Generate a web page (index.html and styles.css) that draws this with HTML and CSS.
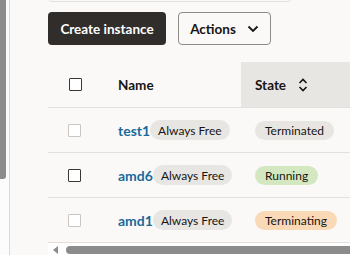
FILE: index.html
```html
<!DOCTYPE html>
<html lang="en">
<head>
  <meta charset="UTF-8" />
  <title>Instances</title>
  <link rel="stylesheet" href="styles.css">
</head>
<body>
  <div class="layout">
    <div class="side"><div class="side-thumb"></div></div>

    <div class="main">
      <div class="filter"></div>

      <div class="toolbar">
        <button class="btn btn-primary">Create instance</button>
        <button class="btn btn-outline">Actions
          <svg width="12" height="8" viewBox="0 0 12 8"><path d="M1.5 1.5 L6 6 L10.5 1.5" fill="none" stroke="#161513" stroke-width="1.8"/></svg>
        </button>
      </div>

      <div class="table">
        <div class="row head">
          <div class="cell check"><span class="box"></span></div>
          <div class="cell name">Name</div>
          <div class="cell state sorted">State
            <svg width="10" height="16" viewBox="0 0 10 16"><path d="M1.5 6 L5 2.5 L8.5 6 M1.5 10 L5 13.5 L8.5 10" fill="none" stroke="#161513" stroke-width="1.6"/></svg>
          </div>
        </div>

        <div class="row">
          <div class="cell check"><span class="box off"></span></div>
          <div class="cell name"><a class="link">test1</a><span class="pill">Always Free</span></div>
          <div class="cell state"><span class="pill status">Terminated</span></div>
        </div>

        <div class="row">
          <div class="cell check"><span class="box"></span></div>
          <div class="cell name"><a class="link">amd6</a><span class="pill">Always Free</span></div>
          <div class="cell state"><span class="pill status running">Running</span></div>
        </div>

        <div class="row">
          <div class="cell check"><span class="box off"></span></div>
          <div class="cell name"><a class="link">amd1</a><span class="pill">Always Free</span></div>
          <div class="cell state"><span class="pill status terminating">Terminating</span></div>
        </div>

        <div class="hscroll">
          <span class="arrow"></span>
          <span class="hthumb"></span>
        </div>
      </div>
    </div>
  </div>
</body>
</html>
```

FILE: styles.css
```css
body {
  margin: 0;
  background: #fbf9f8;
  font-family: Lato, "Noto Sans", sans-serif;
  color: #161513;
  overflow: hidden;
}
.layout {
  display: flex;
  height: 255px;
}
.side {
  width: 9px;
  flex: none;
  background: #fcfcfc;
  border-right: 1px solid #dcdad8;
}
.side-thumb {
  width: 6px;
  height: 179px;
  background: #8c8c8c;
  border-radius: 0 0 3px 0;
}
.main {
  flex: 1;
  min-width: 0;
  padding-left: 38px;
  overflow: hidden;
}
.filter {
  height: 29px;
  margin-top: -29px;
  width: 242px;
  border: 1px solid #e2dfdc;
  border-radius: 4px;
}
.toolbar {
  display: flex;
  gap: 12px;
  margin-top: 10px;
}
.btn {
  height: 33px;
  border-radius: 4px;
  font-family: inherit;
  font-size: 13.5px;
  font-weight: 700;
  padding: 0;
  display: flex;
  align-items: center;
  justify-content: center;
}
.btn-primary {
  width: 118px;
  background: #312d2a;
  color: #fff;
  border: none;
}
.btn-outline {
  width: 93px;
  background: transparent;
  color: #161513;
  border: 1px solid #8f8a85;
  gap: 11px;
}
.table {
  margin-top: 17px;
  width: 420px;
}
.row {
  display: grid;
  grid-template-columns: 70px 123px 1fr;
  height: 44px;
  border-bottom: 1px solid #e2dfdc;
}
.row.head {
  height: 45px;
}
.cell {
  display: flex;
  align-items: center;
}
.head .cell {
  font-size: 13.5px;
  font-weight: 700;
}
.check {
  padding-left: 20px;
}
.head .check {
  padding-left: 21px;
}
.box {
  width: 11px;
  height: 11px;
  border: 1px solid #3a3633;
  border-radius: 1px;
  background: #fff;
}
.box.off {
  border-color: #c9c5c1;
}
.state {
  padding-left: 14px;
}
.sorted {
  background: #e8e6e3;
  gap: 12px;
}
.link {
  color: #1a6a99;
  font-size: 14px;
  font-weight: 700;
}
.pill {
  display: inline-flex;
  align-items: center;
  height: 20px;
  padding: 0 8px;
  border-radius: 10px;
  background: #e8e6e3;
  font-size: 12px;
  white-space: nowrap;
}
.status {
  height: 19px;
  padding: 0 10px;
}
.running {
  background: #d3e8c1;
}
.terminating {
  background: #fad9b7;
}
.hscroll {
  height: 14px;
  background: #fefefe;
  display: flex;
  align-items: center;
}
.arrow {
  width: 0;
  height: 0;
  margin-left: 5px;
  border-top: 4px solid transparent;
  border-bottom: 4px solid transparent;
  border-right: 5px solid #8c8c8c;
}
.hthumb {
  margin-left: 8px;
  flex: 1;
  height: 8px;
  background: #8c8c8c;
  border-radius: 4px 0 0 4px;
}
```
